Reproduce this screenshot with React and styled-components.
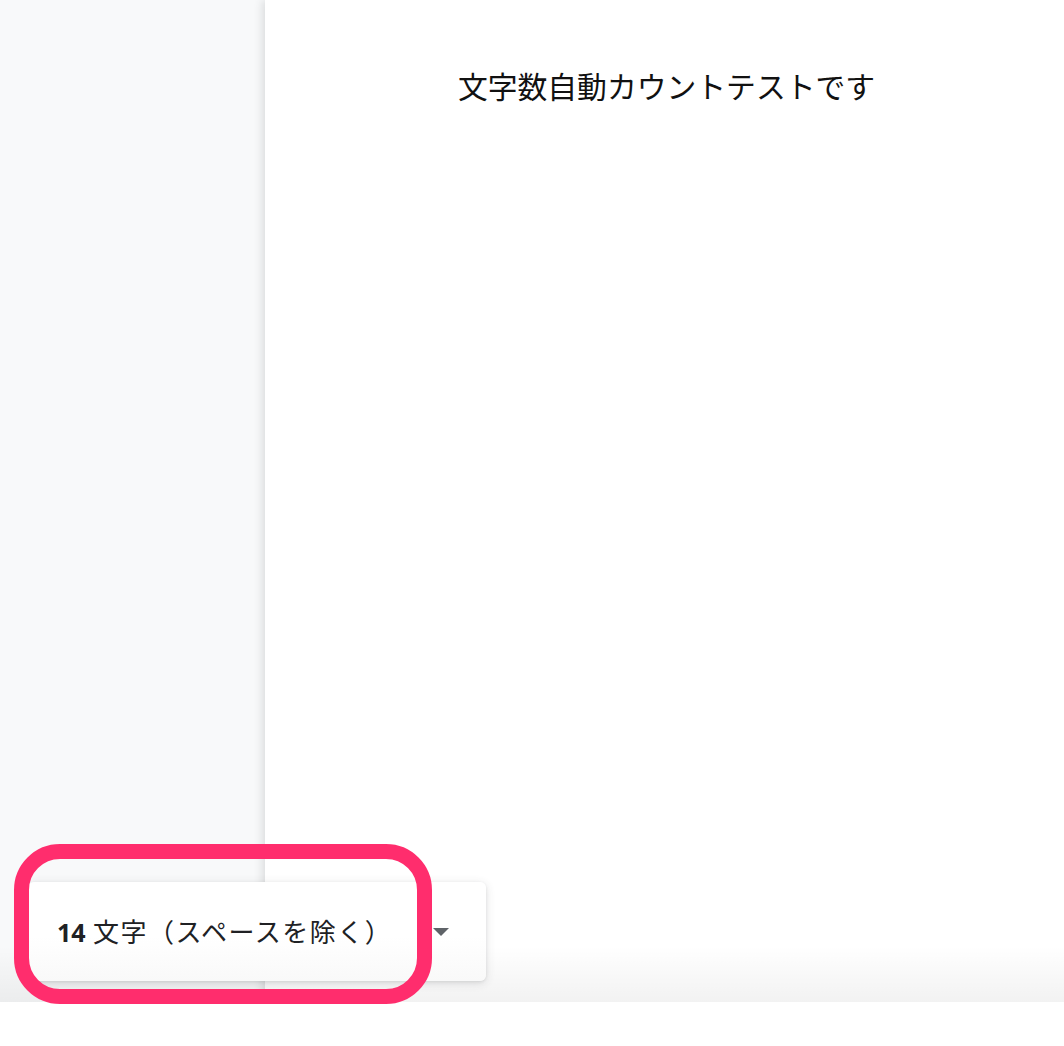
import styled, { createGlobalStyle } from "styled-components";

const GlobalStyle = createGlobalStyle`
  html, body {
    margin: 0;
    padding: 0;
    background: #ffffff;
  }
  body {
    font-family: "Noto Sans", "Noto Sans CJK JP", sans-serif;
    color: #202124;
  }
`;

const Screen = styled.div`
  position: relative;
  width: 1064px;
  height: 1046px;
  overflow: hidden;
  background: #ffffff;
`;

const Workspace = styled.div`
  position: relative;
  display: flex;
  height: 1002px;
  overflow: hidden;
`;

const Sidebar = styled.aside`
  width: 265px;
  flex-shrink: 0;
  background: #f8f9fa;
`;

const Document = styled.main`
  position: relative;
  z-index: 1;
  flex: 1;
  background: #ffffff;
  box-shadow: -3px 0 8px rgba(60, 64, 67, 0.14);
  padding-top: 63px;
  display: flex;
  justify-content: center;
`;

const Title = styled.p`
  margin: 0 0 0 4px;
  font-family: "Noto Sans CJK JP", sans-serif;
  font-size: 29.8px;
  line-height: 44px;
  color: #111111;
  letter-spacing: 0;
`;

const BottomFade = styled.div`
  position: absolute;
  z-index: 2;
  left: 0;
  right: 0;
  bottom: 0;
  height: 56px;
  background: linear-gradient(rgba(0, 0, 0, 0), rgba(0, 0, 0, 0.05));
  pointer-events: none;
`;

const CountCard = styled.div`
  position: absolute;
  z-index: 3;
  left: 28px;
  top: 882px;
  width: 458px;
  height: 99px;
  box-sizing: border-box;
  padding: 0 37px 0 29px;
  display: flex;
  align-items: center;
  justify-content: space-between;
  background: linear-gradient(#ffffff 55%, #f9f9f9);
  border-radius: 6px;
  box-shadow: 0 2px 10px rgba(60, 64, 67, 0.16), 0 1px 3px rgba(60, 64, 67, 0.1);
`;

const CountLabel = styled.span`
  font-family: "Noto Sans CJK JP", sans-serif;
  font-size: 26px;
  letter-spacing: 1.5px;
  line-height: 1;
  color: #202124;
  white-space: nowrap;

  b {
    font-family: "Noto Sans", sans-serif;
    font-size: 25px;
    font-weight: 700;
    letter-spacing: 0;
  }
`;

const DropArrow = styled.svg`
  width: 16px;
  height: 8px;
  display: block;
`;

const Highlight = styled.div`
  position: absolute;
  z-index: 4;
  left: 14px;
  top: 844px;
  width: 418px;
  height: 160px;
  box-sizing: border-box;
  border: 15px solid #ff2d6d;
  border-radius: 46px;
  pointer-events: none;
`;

export default function App() {
  return (
    <>
      <GlobalStyle />
      <Screen>
        <Workspace>
          <Sidebar />
          <Document>
            <Title>文字数自動カウントテストです</Title>
          </Document>
          <BottomFade />
        </Workspace>
        <CountCard>
          <CountLabel>
            <b>14</b> 文字（スペースを除く）
          </CountLabel>
          <DropArrow viewBox="0 0 16 8">
            <path d="M0 0 L16 0 L8 8 Z" fill="#5f6368" />
          </DropArrow>
        </CountCard>
        <Highlight />
      </Screen>
    </>
  );
}
